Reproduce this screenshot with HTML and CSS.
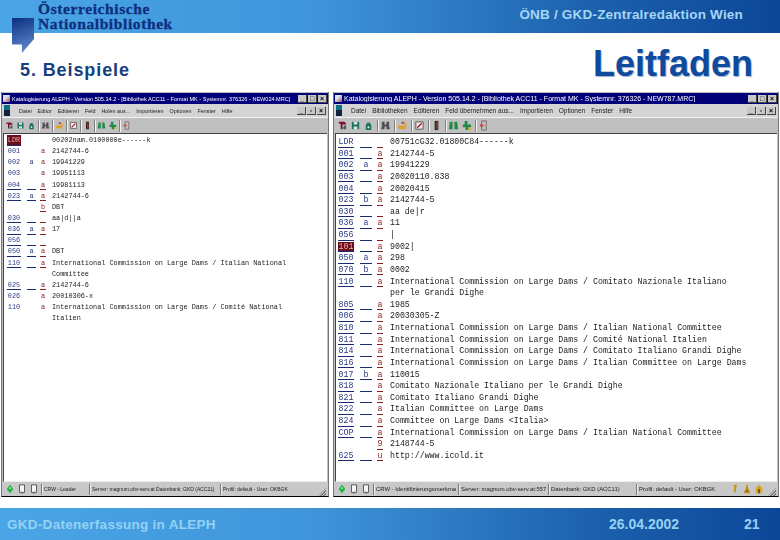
FILE: index.html
```html
<!DOCTYPE html>
<html lang="de">
<head>
<meta charset="utf-8">
<title>Leitfaden</title>
<link rel="stylesheet" href="styles.css">
</head>
<body>
<svg class="defs" width="0" height="0" aria-hidden="true">
  <symbol id="new" viewBox="0 0 12 12"><path d="M2 2h6l2 2v1H6v5H4V4H2z" fill="#7a1030"/><path d="M8 6h2v4H7V8z" fill="#2a6a50"/></symbol>
  <symbol id="save" viewBox="0 0 12 12"><path d="M2 2h8v8H2z" fill="#1f6f5f"/><path d="M4 2h4v3H4zM4 7h4v3H4z" fill="#d8e8e0"/></symbol>
  <symbol id="lock" viewBox="0 0 12 12"><path d="M4 5V3h4v2h1v6H3V5z" fill="#1f6f5f"/><path d="M5 7h2v2H5z" fill="#dfe"/></symbol>
  <symbol id="find" viewBox="0 0 12 12"><path d="M2 2h3v3h2V2h3v5l1 3H7V7H5v3H1l1-3z" fill="#505058"/></symbol>
  <symbol id="open" viewBox="0 0 12 12"><path d="M1 6h7l2-3 1 1-2 6H2z" fill="#e0a030"/><path d="M5 2h3v2H5z" fill="#b04030"/></symbol>
  <symbol id="check" viewBox="0 0 12 12"><path d="M2 2h8v8H2z" fill="#f4e8e8" stroke="#555"/><path d="M3 8l5-5 1 1-5 5z" fill="#b01020"/></symbol>
  <symbol id="book" viewBox="0 0 12 12"><path d="M4 1h4v10H4z" fill="#402018"/><path d="M6 2h1v8H6z" fill="#8a7060"/></symbol>
  <symbol id="bino" viewBox="0 0 12 12"><path d="M2 2h3v8H1zM7 2h3l1 8H7z" fill="#1f8a4a"/><path d="M5 4h2v2H5z" fill="#c8a040"/></symbol>
  <symbol id="tree" viewBox="0 0 12 12"><path d="M4 1h3v4h4v3H8v3H5V8H2V5h2z" fill="#1f8a4a"/><path d="M8 8h3v3H8z" fill="#d0b030"/></symbol>
  <symbol id="door" viewBox="0 0 12 12"><path d="M4 1h5v10H4z" fill="none" stroke="#806060"/><path d="M2 5h4v2H2z" fill="#c04030"/></symbol>
  <symbol id="doc" viewBox="0 0 12 12"><path d="M3 1h6v9H3z" fill="#f4f4f4" stroke="#444"/><path d="M3 10l3 2 3-2" fill="none" stroke="#888"/></symbol>
  <symbol id="led" viewBox="0 0 12 12"><path d="M6 1l4 5-4 5-4-5z" fill="#20b040"/><path d="M5 4h2v2H5z" fill="#a0f0a0"/></symbol>
  <symbol id="key" viewBox="0 0 12 12"><path d="M5 1h3v3H7v6H5V8H4V7h1z" fill="#c89010"/></symbol>
  <symbol id="person" viewBox="0 0 12 12"><path d="M5 1h2v3l3 7H2l3-7z" fill="#c89010"/><path d="M4 8h4v1H4z" fill="#604020"/></symbol>
  <symbol id="home" viewBox="0 0 12 12"><path d="M6 1l4 4v6H2V5z" fill="#d8a820"/><path d="M5 6h2v5H5z" fill="#604020"/></symbol>
</svg>

<header class="top-band">
  <div class="logo">
    <span class="logo-flag"></span>
    <div class="logo-text">Österreichische<br>Nationalbibliothek</div>
  </div>
  <div class="top-org">ÖNB / GKD-Zentralredaktion Wien</div>
</header>

<section class="heading">
  <h2 class="sub-title">5. Beispiele</h2>
  <h1 class="main-title">Leitfaden</h1>
</section>

<main class="windows">
  <article class="win win-left">
    <div class="titlebar">
      <span class="app-ico"></span>
      <span class="title-text">Katalogisierung ALEPH - Version 505.14.2 - [Bibliothek ACC11 - Format MK - Systemnr. 376326 - NEW024.MRC]</span>
      <span class="ctl">_</span><span class="ctl">□</span><span class="ctl">×</span>
    </div>
    <div class="menubar">
      <span class="doc-ico"></span>
      <span>Datei</span><span>Editor</span><span>Editieren</span><span>Feld</span><span>Holen aus...</span><span>Importieren</span><span>Optionen</span><span>Fenster</span><span>Hilfe</span>
      <span class="menu-ctl"><span class="ctl">_</span><span class="ctl">▫</span><span class="ctl">×</span></span>
    </div>
    <div class="toolbar">
      <svg class="tb"><use href="#new"/></svg><svg class="tb"><use href="#save"/></svg><svg class="tb"><use href="#lock"/></svg><i class="sep"></i>
      <svg class="tb"><use href="#find"/></svg><i class="sep"></i><svg class="tb"><use href="#open"/></svg><i class="sep"></i>
      <svg class="tb"><use href="#check"/></svg><i class="sep"></i><svg class="tb"><use href="#book"/></svg><i class="sep"></i>
      <svg class="tb"><use href="#bino"/></svg><svg class="tb"><use href="#tree"/></svg><i class="sep"></i><svg class="tb"><use href="#door"/></svg>
    </div>
    <div class="record">
      <div class="row"><b class="tag hot">LDR</b><b class="ind bare"></b><b class="sub bare"></b><span>00202nam.0100000e------k</span></div>
      <div class="row"><b class="tag bare">001</b><b class="ind bare"></b><b class="sub bare">a</b><span>2142744-6</span></div>
      <div class="row"><b class="tag bare">002</b><b class="ind bare">a</b><b class="sub bare">a</b><span>19941229</span></div>
      <div class="row"><b class="tag bare">003</b><b class="ind bare"></b><b class="sub bare">a</b><span>19951113</span></div>
      <div class="row"><b class="tag">004</b><b class="ind"></b><b class="sub">a</b><span>19981113</span></div>
      <div class="row"><b class="tag">023</b><b class="ind">a</b><b class="sub">a</b><span>2142744-6</span></div>
      <div class="row"><b class="tag bare"></b><b class="ind bare"></b><b class="sub">b</b><span>DBT</span></div>
      <div class="row"><b class="tag">030</b><b class="ind"></b><b class="sub"></b><span>aa|d||a</span></div>
      <div class="row"><b class="tag">036</b><b class="ind">a</b><b class="sub">a</b><span>17</span></div>
      <div class="row"><b class="tag">056</b><b class="ind"></b><b class="sub"></b><span></span></div>
      <div class="row"><b class="tag">050</b><b class="ind">a</b><b class="sub">a</b><span>DBT</span></div>
      <div class="row"><b class="tag">110</b><b class="ind"></b><b class="sub">a</b><span>International Commission on Large Dams / Italian National</span></div>
      <div class="row"><b class="tag bare"></b><b class="ind bare"></b><b class="sub bare"></b><span>Committee</span></div>
      <div class="row"><b class="tag">025</b><b class="ind"></b><b class="sub">a</b><span>2142744-6</span></div>
      <div class="row"><b class="tag bare">026</b><b class="ind bare"></b><b class="sub bare">a</b><span>20010306-x</span></div>
      <div class="row"><b class="tag bare">110</b><b class="ind bare"></b><b class="sub bare">a</b><span>International Commission on Large Dams / Comité National</span></div>
      <div class="row"><b class="tag bare"></b><b class="ind bare"></b><b class="sub bare"></b><span>Italien</span></div>
    </div>
    <footer class="status">
      <svg class="st"><use href="#led"/></svg><svg class="st"><use href="#doc"/></svg><svg class="st"><use href="#doc"/></svg>
      <span class="panel p1">CRW - Leader</span>
      <span class="panel p2">Server: magnum.obv-serv.at  Datenbank: GKD (ACC11)</span>
      <span class="panel p3">Profil: default - User: OKBGK</span>
      <span class="grip"></span>
    </footer>
  </article>

  <article class="win win-right">
    <div class="titlebar">
      <span class="app-ico"></span>
      <span class="title-text">Katalogisierung ALEPH - Version 505.14.2 - [Bibliothek ACC11 - Format MK - Systemnr. 376326 - NEW787.MRC]</span>
      <span class="ctl">_</span><span class="ctl">□</span><span class="ctl">×</span>
    </div>
    <div class="menubar">
      <span class="doc-ico"></span>
      <span>Datei</span><span>Bibliotheken</span><span>Editieren</span><span>Feld übernehmen aus...</span><span>Importieren</span><span>Optionen</span><span>Fenster</span><span>Hilfe</span>
      <span class="menu-ctl"><span class="ctl">_</span><span class="ctl">▫</span><span class="ctl">×</span></span>
    </div>
    <div class="toolbar">
      <svg class="tb"><use href="#new"/></svg><svg class="tb"><use href="#save"/></svg><svg class="tb"><use href="#lock"/></svg><i class="sep"></i>
      <svg class="tb"><use href="#find"/></svg><i class="sep"></i><svg class="tb"><use href="#open"/></svg><i class="sep"></i>
      <svg class="tb"><use href="#check"/></svg><i class="sep"></i><svg class="tb"><use href="#book"/></svg><i class="sep"></i>
      <svg class="tb"><use href="#bino"/></svg><svg class="tb"><use href="#tree"/></svg><i class="sep"></i><svg class="tb"><use href="#door"/></svg>
    </div>
    <div class="record">
      <div class="row"><b class="tag">LDR</b><b class="ind"></b><b class="sub"></b><span>00751cG32.01800C84------k</span></div>
      <div class="row"><b class="tag">001</b><b class="ind"></b><b class="sub">a</b><span>2142744-5</span></div>
      <div class="row"><b class="tag">002</b><b class="ind">a</b><b class="sub">a</b><span>19941229</span></div>
      <div class="row"><b class="tag">003</b><b class="ind"></b><b class="sub">a</b><span>20020110.838</span></div>
      <div class="row"><b class="tag">004</b><b class="ind"></b><b class="sub">a</b><span>20020415</span></div>
      <div class="row"><b class="tag">023</b><b class="ind">b</b><b class="sub">a</b><span>2142744-5</span></div>
      <div class="row"><b class="tag">030</b><b class="ind"></b><b class="sub"></b><span>aa de|r</span></div>
      <div class="row"><b class="tag">036</b><b class="ind">a</b><b class="sub">a</b><span>11</span></div>
      <div class="row"><b class="tag">056</b><b class="ind"></b><b class="sub"></b><span>|</span></div>
      <div class="row"><b class="tag hot">101</b><b class="ind"></b><b class="sub">a</b><span>9002|</span></div>
      <div class="row"><b class="tag">050</b><b class="ind">a</b><b class="sub">a</b><span>298</span></div>
      <div class="row"><b class="tag">070</b><b class="ind">b</b><b class="sub">a</b><span>0002</span></div>
      <div class="row"><b class="tag">110</b><b class="ind"></b><b class="sub">a</b><span>International Commission on Large Dams / Comitato Nazionale Italiano</span></div>
      <div class="row"><b class="tag bare"></b><b class="ind bare"></b><b class="sub bare"></b><span>per le Grandi Dighe</span></div>
      <div class="row"><b class="tag">805</b><b class="ind"></b><b class="sub">a</b><span>1985</span></div>
      <div class="row"><b class="tag">006</b><b class="ind"></b><b class="sub">a</b><span>20030305-Z</span></div>
      <div class="row"><b class="tag">810</b><b class="ind"></b><b class="sub">a</b><span>International Commission on Large Dams / Italian National Committee</span></div>
      <div class="row"><b class="tag">811</b><b class="ind"></b><b class="sub">a</b><span>International Commission on Large Dams / Comité National Italien</span></div>
      <div class="row"><b class="tag">814</b><b class="ind"></b><b class="sub">a</b><span>International Commission on Large Dams / Comitato Italiano Grandi Dighe</span></div>
      <div class="row"><b class="tag">816</b><b class="ind"></b><b class="sub">a</b><span>International Commission on Large Dams / Italian Committee on Large Dams</span></div>
      <div class="row"><b class="tag">017</b><b class="ind">b</b><b class="sub">a</b><span>110015</span></div>
      <div class="row"><b class="tag">818</b><b class="ind"></b><b class="sub">a</b><span>Comitato Nazionale Italiano per le Grandi Dighe</span></div>
      <div class="row"><b class="tag">821</b><b class="ind"></b><b class="sub">a</b><span>Comitato Italiano Grandi Dighe</span></div>
      <div class="row"><b class="tag">822</b><b class="ind"></b><b class="sub">a</b><span>Italian Committee on Large Dams</span></div>
      <div class="row"><b class="tag">824</b><b class="ind"></b><b class="sub">a</b><span>Committee on Large Dams &lt;Italia&gt;</span></div>
      <div class="row"><b class="tag">COP</b><b class="ind"></b><b class="sub">a</b><span>International Commission on Large Dams / Italian National Committee</span></div>
      <div class="row"><b class="tag bare"></b><b class="ind bare"></b><b class="sub">9</b><span>2148744-5</span></div>
      <div class="row"><b class="tag">625</b><b class="ind"></b><b class="sub">u</b><span>http://www.icold.it</span></div>
    </div>
    <footer class="status">
      <svg class="st"><use href="#led"/></svg><svg class="st"><use href="#doc"/></svg><svg class="st"><use href="#doc"/></svg>
      <span class="panel p0">CRW - Identifizierungsmerkmal</span>
      <span class="panel p1">Server: magnum.obv-serv.at:557</span>
      <span class="panel p2">Datenbank: GKD (ACC11)</span>
      <span class="panel p3">Profil: default - User: OKBGK</span>
      <svg class="st st-gap"><use href="#key"/></svg><svg class="st"><use href="#person"/></svg><svg class="st"><use href="#home"/></svg>
      <span class="grip"></span>
    </footer>
  </article>
</main>

<footer class="bottom-band">
  <span class="bottom-left">GKD-Datenerfassung in ALEPH</span>
  <span class="bottom-date">26.04.2002</span>
  <span class="bottom-page">21</span>
</footer>
</body>
</html>
```

FILE: styles.css
```css
* { box-sizing: border-box; }
html, body { margin: 0; padding: 0; }
body {
  width: 780px;
  height: 540px;
  overflow: hidden;
  background: #fff;
  font-family: "Liberation Sans", Arial, sans-serif;
  display: flex;
  flex-direction: column;
}
.defs { position: absolute; }

.top-band {
  height: 33px;
  flex: none;
  display: flex;
  justify-content: space-between;
  background: linear-gradient(90deg, #4aa5e6 0%, #3f95da 40%, #1d62ae 75%, #0c4797 100%);
}
.logo { padding-left: 38px; position: relative; }
.logo-flag {
  position: absolute;
  left: 12px;
  top: 18px;
  width: 22px;
  height: 35px;
  background: linear-gradient(160deg, #0c2f80, #5d89cd 90%);
  clip-path: polygon(0 0, 100% 0, 100% 60%, 45% 100%, 45% 76%, 0 76%);
}
.logo-text {
  font-family: "Liberation Serif", serif;
  font-weight: 700;
  font-size: 15.5px;
  line-height: 15px;
  letter-spacing: .6px;
  color: #0d2f7d;
  padding-top: 1px;
  -webkit-text-stroke: .3px #0d2f7d;
}
.top-org {
  padding: 7px 37px 0 0;
  font-size: 13.5px;
  line-height: 16px;
  font-weight: 700;
  letter-spacing: .2px;
  color: #a4d6f5;
}

.heading {
  height: 59px;
  flex: none;
  display: flex;
  justify-content: space-between;
  align-items: flex-end;
  padding: 0 27px 9px 20px;
}
.sub-title {
  margin: 0 0 3px;
  font-size: 18px;
  line-height: 20px;
  font-weight: 700;
  letter-spacing: .9px;
  color: #173f80;
}
.main-title {
  margin: 0 0 -1px;
  font-size: 36px;
  line-height: 40px;
  font-weight: 700;
  color: #0e4a9e;
  text-shadow: 1px 1px 1px #9fb2cc;
}

.windows {
  height: 405px;
  flex: none;
  display: flex;
  gap: 4px;
  padding-left: 1px;
}
.win {
  display: flex;
  flex-direction: column;
  background: #c0c0c0;
  border-bottom: 1px solid #000;
  border-left: 1px solid #777;
  border-right: 1px solid #777;
  padding-top: 1px;
  filter: blur(.3px);
}
.win-left {
  width: 328px;
  --tx: 5.55px; --mn: 5.4px; --st: 5px; --mono: 6.85px;
  --tagw: 14px; --indw: 9px; --subm: 4px; --textm: 6px;
  --pad: 3px; --top: 1px; --ln: 11.15px;
  --tbs: 9px; --sepm: 0;
}
.win-right {
  width: 446px;
  --tx: 7px; --mn: 6.5px; --st: 5.9px; --mono: 8.25px;
  --tagw: 16px; --indw: 12px; --subm: 5px; --textm: 7px;
  --pad: 2px; --top: 3px; --ln: 11.63px;
  --tbs: 11px; --sepm: .5px;
}

.titlebar {
  height: 11px;
  flex: none;
  display: flex;
  align-items: center;
  gap: 1px;
  padding: 0 1px;
  background: #000078;
  color: #fff;
  font-size: var(--tx);
  white-space: nowrap;
}
.app-ico { width: 7px; height: 7px; margin-right: 1px; flex: none; background: linear-gradient(135deg, #d8e0f0 40%, #b04848); }
.title-text { flex: 1; overflow: hidden; }
.ctl {
  width: 9px;
  height: 8px;
  flex: none;
  background: #c8c8c8;
  color: #000;
  font-size: 7px;
  line-height: 8px;
  font-weight: 700;
  text-align: center;
  border: 1px solid;
  border-color: #fff #444 #444 #fff;
  border-width: 0 1px 1px 0;
}

.menubar {
  height: 14px;
  flex: none;
  display: flex;
  align-items: center;
  gap: 6px;
  padding: 0 2px;
  background: #d4d4d4;
  border-bottom: 1px solid #f2f2f2;
  font-size: var(--mn);
  color: #222;
  white-space: nowrap;
}
.doc-ico { width: 6px; height: 11px; flex: none; background: linear-gradient(#0a7080 50%, #162040 50%); margin-right: 3px; }
.menu-ctl { margin-left: auto; display: flex; gap: 1px; }

.toolbar {
  height: 15px;
  flex: none;
  display: flex;
  align-items: center;
  gap: 2px;
  padding: 0 3px;
  background: #c0c0c0;
}
.tb { width: var(--tbs); height: 11px; flex: none; }
.sep { width: 1px; height: 12px; background: #808080; box-shadow: 1px 0 #f4f4f4; margin: 0 var(--sepm); flex: none; }

.record {
  flex: 1;
  margin: 0 1px;
  padding: var(--top) 0 0 var(--pad);
  background: #fff;
  border-top: 1px solid #444;
  border-left: 1px solid #444;
  border-bottom: 1px solid #eee;
  overflow: hidden;
}
.row {
  display: flex;
  align-items: flex-start;
  height: var(--ln);
  line-height: 10px;
  font-family: "Liberation Mono", monospace;
  font-size: var(--mono);
  color: #222;
  white-space: nowrap;
}
.row b { font-weight: 400; display: block; height: 10.5px; flex: none; border-bottom: 1px solid #1a2a70; }
.tag { width: var(--tagw); color: #283a80; text-align: center; }
.ind { width: var(--indw); margin-left: 6px; color: #283a80; text-align: center; }
.sub { width: 6px; margin-left: var(--subm); color: #8a2020; text-align: center; border-bottom-color: #8a2020 !important; }
.row span { margin-left: var(--textm); }
.row .bare { border-bottom-color: transparent !important; }
.row .hot { background: #6e0a1c; color: #e8b0b0; }

.status {
  height: 14px;
  flex: none;
  display: flex;
  align-items: center;
  gap: 2px;
  padding: 0 2px 0 3px;
  background: #c8c8c8;
  font-size: var(--st);
  color: #222;
  white-space: nowrap;
}
.st { width: 10px; height: 10px; flex: none; }
.st-gap { margin-left: 4px; }
.panel {
  height: 11px;
  line-height: 10px;
  padding-left: 2px;
  border-left: 1px solid #777;
  box-shadow: 1px 0 #eee inset;
  overflow: hidden;
  flex: none;
}
.win-left .p1 { width: 46px; }
.win-left .p2 { width: 129px; }
.win-left .p3 { width: 85px; }
.win-right .p0 { width: 83px; }
.win-right .p1 { width: 88px; }
.win-right .p2 { width: 86px; }
.win-right .p3 { width: 88px; }
.grip {
  margin-left: auto;
  width: 8px;
  height: 8px;
  flex: none;
  align-self: flex-end;
  background: repeating-linear-gradient(135deg, #c8c8c8 0 1px, #808080 1px 2px);
  clip-path: polygon(100% 0, 100% 100%, 0 100%);
}

.bottom-band {
  margin-top: 11px;
  height: 32px;
  flex: none;
  display: flex;
  align-items: center;
  background: linear-gradient(90deg, #4aa5e6 0%, #3f95da 40%, #1d62ae 75%, #0c4797 100%);
  color: #94d2f5;
  font-size: 13.5px;
  font-weight: 700;
}
.bottom-left { padding-left: 7px; width: 609px; letter-spacing: .28px; }
.bottom-date { width: 135px; font-size: 14px; }
.bottom-page { font-size: 14px; }
```
